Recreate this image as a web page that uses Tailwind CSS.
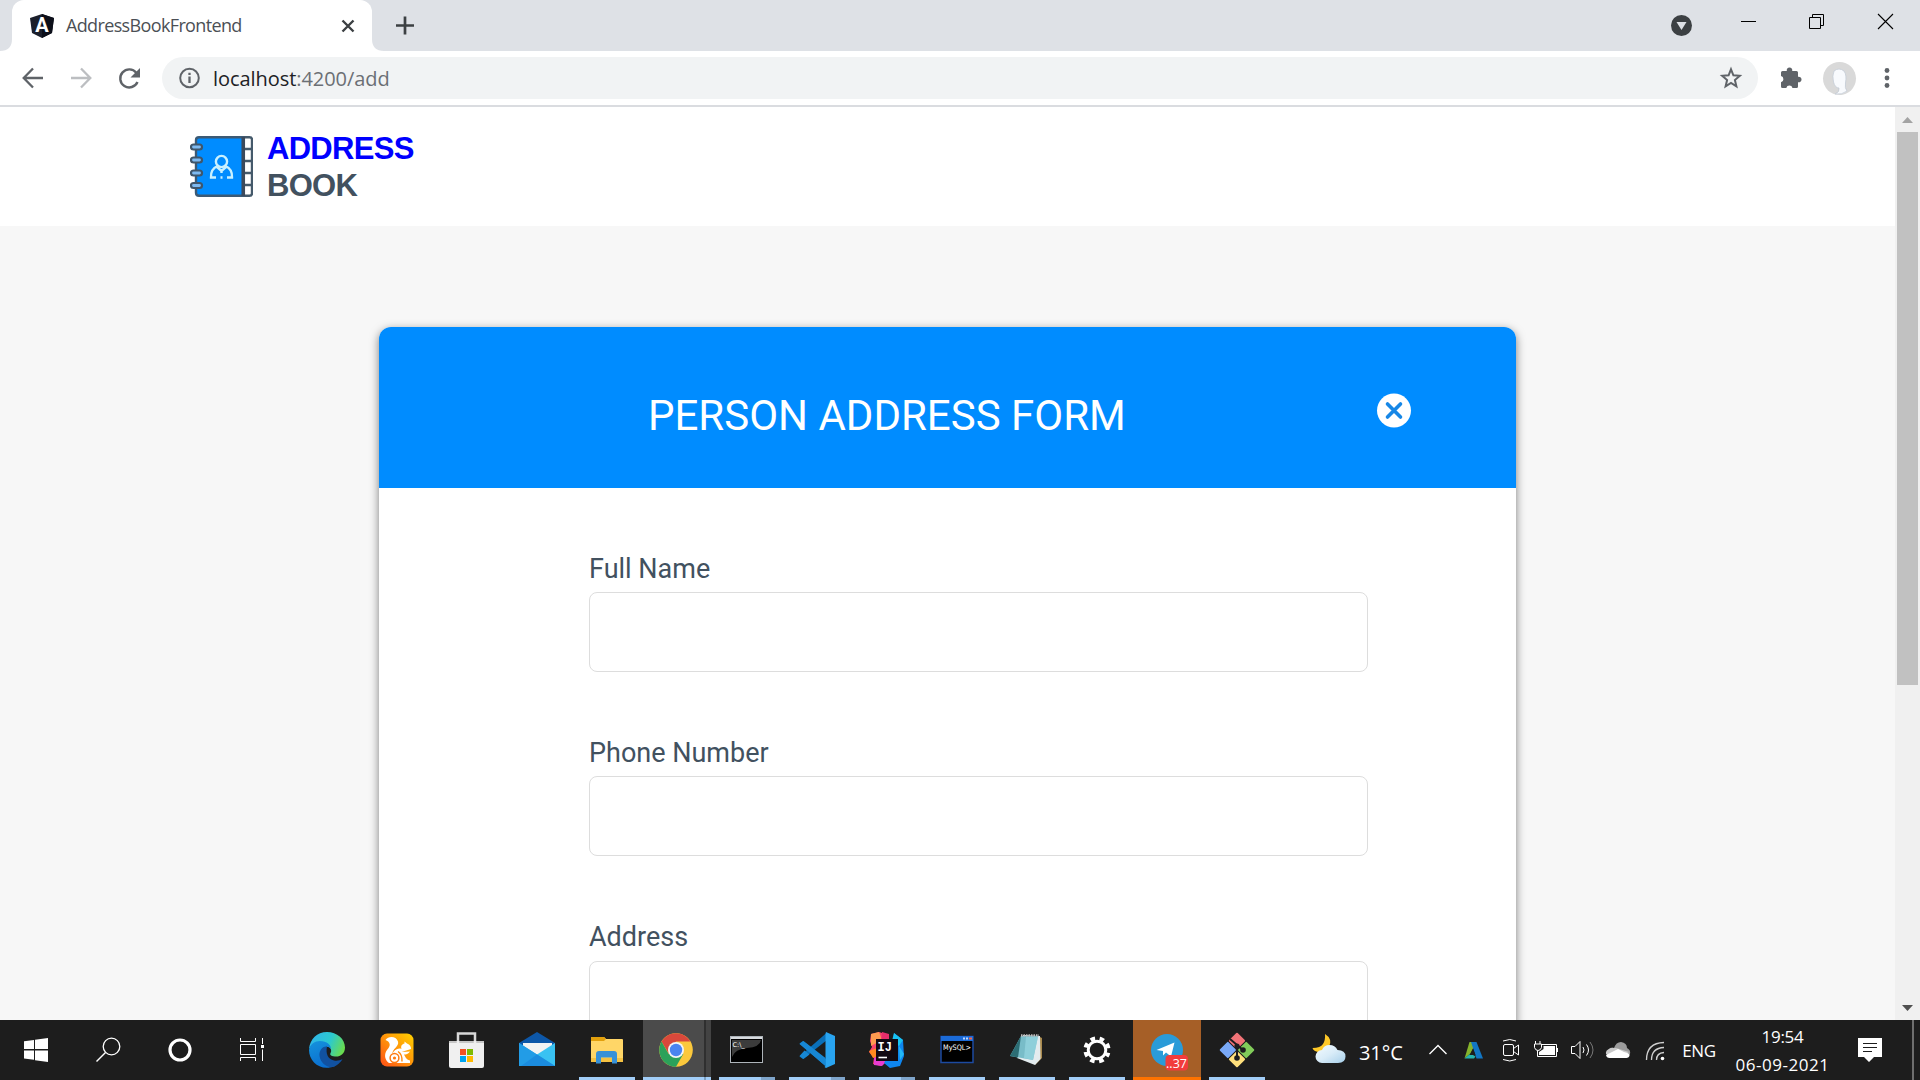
<!DOCTYPE html>
<html lang="en">
<head>
<meta charset="utf-8">
<title>AddressBookFrontend</title>
<script src="https://cdn.jsdelivr.net/npm/@tailwindcss/browser@4"></script>
</head>
<body class="w-[1920px] h-[1080px] overflow-hidden flex flex-col bg-white font-['Open_Sans',sans-serif]">

<!-- Tab strip -->
<header class="h-[51px] shrink-0 bg-[#dee1e6] flex">
  <svg class="w-3 h-[51px] shrink-0" viewBox="0 0 12 51"><path d="M12 39V51H0Q12 51 12 39Z" fill="#fff"/></svg>
  <div class="w-[360px] shrink-0 bg-white rounded-t-[12px] flex items-center">
    <svg class="w-6 h-6 ml-[18px] mt-[1px] shrink-0" viewBox="30 14 24 24">
      <path d="M42 14l12 4-2 15-10 5-10-5-2-15z" fill="#1b1f2b"/><path d="M42 14l12 4-2 15-10 5z" fill="#0c0f1a"/>
      <text x="42" y="32" font-family="Roboto" font-weight="700" font-size="20" text-anchor="middle" fill="#fff">A</text>
    </svg>
    <span class="ml-3 -mt-px w-[272px] shrink-0 text-[18px] leading-6 tracking-[-0.64px] text-[#4b4f55] whitespace-nowrap">AddressBookFrontend</span>
    <svg class="w-5 h-5 shrink-0" viewBox="338 15.500 20 20"><path d="M342.500 20l11 11M353.500 20l-11 11" stroke="#3c4043" stroke-width="2.400"/></svg>
  </div>
  <svg class="w-3 h-[51px] shrink-0" viewBox="0 0 12 51"><path d="M0 39V51H12Q0 51 0 39Z" fill="#fff"/></svg>
  <svg class="w-[42px] h-[51px]" viewBox="384 0 42 51"><path d="M396 25.500h18M405 16.500v18" stroke="#3c4043" stroke-width="2.700"/></svg>
  <svg class="w-[260px] h-[51px] ml-auto" viewBox="1660 0 260 51" fill="none">
    <circle cx="1681.500" cy="25.500" r="10.500" fill="#3c4043"/><path d="M1676.500 22h10l-5 8z" fill="#dee1e6"/>
    <path d="M1741 21.500h15" stroke="#000"/>
    <path d="M1809.500 17.500h11v11h-11zM1812.500 17.500v-3h11v11h-3" stroke="#000"/>
    <path d="M1878 14l15 15M1893 14l-15 15" stroke="#000" stroke-width="1.100"/>
  </svg>
</header>

<!-- Toolbar -->
<nav class="h-[56px] shrink-0 border-b-2 border-[#dadce0] bg-white flex items-center">
  <svg class="w-[162px] h-[54px] shrink-0" viewBox="0 51 162 54" fill="none">
    <path d="M43 78H25M33 68.500L23.700 78L33 87.500" stroke="#5f6368" stroke-width="2.300"/>
    <path d="M71 78h18M81 68.500L90.300 78L81 87.500" stroke="#bcbec1" stroke-width="2.300"/>
    <path d="M137.500 82a9 9 0 1 1-1.200-9.200" stroke="#5f6368" stroke-width="2.400"/><path d="M140 68v9.500h-9.500z" fill="#5f6368"/>
  </svg>
  <div class="w-[1596px] h-[42px] rounded-full bg-[#f1f3f4] flex items-center shrink-0">
    <svg class="w-[22px] h-[22px] ml-4 shrink-0" viewBox="178 67.500 22 22" fill="none"><circle cx="189.500" cy="78.500" r="9.300" stroke="#5f6368" stroke-width="2"/><path d="M189.500 77v6.500M189.500 73.300v2.300" stroke="#5f6368" stroke-width="2.300"/></svg>
    <span class="ml-[13px] mt-[2px] text-[20px] leading-6 tracking-[-0.06px] text-[#6b6f74] whitespace-nowrap"><span class="text-[#202124]">localhost</span>:4200/add</span>
    <svg class="w-6 h-6 ml-auto mr-[15px]" viewBox="0 0 24 24"><path d="M12 3.300l2.400 6 6.400.5-4.900 4.200 1.500 6.300-5.400-3.400-5.400 3.400 1.500-6.300-4.900-4.200 6.400-.5z" fill="none" stroke="#5f6368" stroke-width="2"/></svg>
  </div>
  <svg class="w-[162px] h-[54px] shrink-0" viewBox="1758 51 162 54">
    <path d="M1782.500 71h4.300a2.800 2.800 0 1 1 5.400 0h4.300q1.500 0 1.500 1.500v4.300a2.800 2.800 0 1 1 0 5.400v4.300q0 1.500-1.500 1.500h-4a3.200 3.200 0 0 0-6.200 0h-3.800q-1.500 0-1.500-1.500v-4.200a3.200 3.200 0 0 0 0-6.200v-3.600q0-1.500 1.500-1.500z" fill="#5f6368"/>
    <circle cx="1839.500" cy="78.500" r="16.500" fill="#d9d9d9"/>
    <path d="M1834 71q5-4 10 0q3 4 1.500 12q-1 5 1.500 8q-5 4-12 3q5-2 4-6q-4 0-5.500-6q-1.500-6 .5-11z" fill="#f8fafd" stroke="#c4ccd6" stroke-width=".8"/>
    <g fill="#5f6368"><circle cx="1887" cy="70.500" r="2.400"/><circle cx="1887" cy="78" r="2.400"/><circle cx="1887" cy="85.500" r="2.400"/></g>
  </svg>
</nav>

<!-- Page viewport -->
<div class="h-[913px] shrink-0 flex overflow-hidden">
  <main class="w-[1895px] bg-[#f7f7f7] overflow-hidden">
    <div class="h-[119px] bg-white flex pl-[190px] pt-[29px]">
      <svg class="w-[63px] h-[61px] shrink-0" viewBox="190 136 63 61" fill="none">
        <rect x="240" y="137.200" width="12" height="58.600" rx="2.500" fill="#fff" stroke="#455a6b" stroke-width="2.400"/>
        <path d="M244 149h8M244 161h8M244 173h8M244 185h8" stroke="#455a6b" stroke-width="2.600"/>
        <path d="M199 137.200h44v58.600h-44q-3 0-3-3v-52.600q0-3 3-3z" fill="#008cff" stroke="#3c5a75" stroke-width="2.400"/>
        <path d="M243.300 137v59" stroke="#3c4a5c" stroke-width="3.500"/>
        <g stroke="#3f566b" stroke-width="2.200" fill="#7fbaf0"><rect x="191" y="144.500" width="11" height="5" rx="2.500"/><rect x="191" y="157.500" width="11" height="5" rx="2.500"/><rect x="191" y="170.500" width="11" height="5" rx="2.500"/><rect x="191" y="183" width="11" height="5" rx="2.500"/></g>
        <g stroke="#c9f1ff" stroke-width="2.400"><circle cx="221.500" cy="161.500" r="5.600"/><path d="M217.500 166q-7 3-6.500 11.500h5M225.500 166q7 3 6.500 11.500h-5M217 167l4.500 4 4.500-4M221.500 171v2M220.500 177.500h2"/></g>
      </svg>
      <div class="ml-[14px] -mt-[6px] font-['Liberation_Sans',sans-serif] font-bold text-[31px] leading-[37px] tracking-[-0.7px]">
        <div class="text-[#0000ff]">ADDRESS</div>
        <div class="text-[#42515f]">BOOK</div>
      </div>
    </div>
    <section class="mt-[101px] ml-[379px] w-[1137px] h-[900px] rounded-[12px] bg-white shadow-[0_3px_10px_rgba(0,0,0,0.5)] overflow-hidden font-['Roboto',sans-serif]">
      <div class="h-[161px] bg-[#008cff] flex">
        <h1 class="ml-[269px] mt-[64px] w-[728px] text-[42px] leading-[50px] text-white whitespace-nowrap">PERSON ADDRESS FORM</h1>
        <svg class="w-[36px] h-[36px] mt-[66px] shrink-0" viewBox="0 0 36 36"><circle cx="18" cy="17.500" r="17" fill="#fff"/><path d="M11.500 11l13 13M24.500 11l-13 13" stroke="#1787e6" stroke-width="3.600" stroke-linecap="round"/></svg>
      </div>
      <form class="pl-[210px] pt-[65px] text-[27px] leading-8 text-[#42515f]">
        <label class="block h-[184px]">Full Name<input class="block mt-[7px] w-[779px] h-20 rounded-[8px] border border-[#dddddd]"></label>
        <label class="block h-[184px]">Phone Number<input class="block mt-[7px] w-[779px] h-20 rounded-[8px] border border-[#dddddd]"></label>
        <label class="block h-[184px]">Address<input class="block mt-2 w-[779px] h-20 rounded-[8px] border border-[#dddddd]"></label>
      </form>
    </section>
  </main>
  <div class="w-[25px] bg-[#f0f0f0] flex flex-col items-center">
    <svg class="w-[25px] h-[25px] shrink-0" viewBox="0 0 25 25"><path d="M7 16h11l-5.500-6z" fill="#a3a3a3"/></svg>
    <div class="w-[21px] h-[553px] bg-[#c1c1c1]"></div>
    <svg class="w-[25px] h-[25px] mt-auto" viewBox="0 0 25 25"><path d="M7 10h11l-5.500 6z" fill="#505050"/></svg>
  </div>
</div>

<!-- Taskbar -->
<footer class="h-[60px] shrink-0 bg-[#1d1d1d] flex text-white">
  <svg class="w-[292px] h-[60px] shrink-0" viewBox="0 1020 292 60" fill="none">
    <path d="M24 1041.300l10-1.300v9H24zM35 1039.800l13-1.800v11H35zM24 1050.500h10v9.200l-10-1.300zM35 1050.500h13V1062l-13-1.800z" fill="#fff"/>
    <circle cx="111.500" cy="1046.500" r="8.300" stroke="#fff" stroke-width="1.300"/><path d="M105.500 1052.500L96.500 1061.500" stroke="#fff" stroke-width="1.500"/>
    <circle cx="180" cy="1050" r="10" stroke="#fff" stroke-width="3.200"/>
    <path d="M240.500 1038v3.500h15v-3.500M240.500 1044.500h15v10h-15zM240.500 1061v-3.500h15v3.500M262.500 1038v6M262.500 1049.500v11.500" stroke="#fff"/><rect x="261" y="1045" width="3" height="3" fill="#fff"/>
  </svg>

  <div class="w-[70px] flex items-center justify-center">
    <svg class="w-9 h-9" viewBox="0 0 36 36">
      <defs><linearGradient id="edgeTop" x1="0" y1=".3" x2="1" y2=".6"><stop offset="0" stop-color="#2fb4ea"/><stop offset=".55" stop-color="#2cc9cf"/><stop offset="1" stop-color="#6bdc4c"/></linearGradient><linearGradient id="edgeLow" x1="0" y1="0" x2=".4" y2="1"><stop offset="0" stop-color="#1593dc"/><stop offset="1" stop-color="#0b6fd0"/></linearGradient></defs>
      <path d="M0 17C1 7 8 0 18 0C28 0 36 7 36 15.500C36 22 31 25 26 24.500C21 24 20.500 22.500 22 20C23 17 20 14 17 14C12 10 4 10 0 17Z" fill="url(#edgeTop)"/>
      <path d="M0 18C1 12 6 9 11 9C18 9 22 13 22 17C18 12 11 16 12 24C13 31 20 35 26 34C12 40 0 30 0 18Z" fill="url(#edgeLow)"/>
      <path d="M18 14.500C13 14 10 19 10.500 24C11.500 31 18 36 24 35C28 34 32 30 33.500 27C31 28.500 28 29 25 28.500C19 27 16.500 22 18 14.500Z" fill="#1151a0"/>
    </svg>
  </div>
  <div class="w-[70px] flex items-center justify-center">
    <svg class="w-[34px] h-[34px]" viewBox="0 0 34 34">
      <defs><linearGradient id="uc" x1="0" y1="1" x2="1" y2="0"><stop offset="0" stop-color="#ff4f17"/><stop offset=".5" stop-color="#ff930a"/><stop offset="1" stop-color="#ffd200"/></linearGradient></defs>
      <rect x=".5" y=".5" width="33" height="33" rx="6.500" fill="url(#uc)"/>
      <path d="M5.500 7C8 3 16 2.500 18 8.500C19.500 13.500 12 16 12.500 20.500C14 17 18 14.500 21.500 16C20.500 13 22 11 24.500 10.500L24.500 8.500L27 10.500C30 11.500 31 13.500 31 16L21.500 19L30 18.500C28.500 21 26 21.500 24 21.500C25.500 24 26 26.500 30 27.500V30H9C4.500 27 4 21 7 17C9.500 14 10.500 12 9 9.500C8 8 7 7.500 5.500 7Z" fill="#fff"/>
      <circle cx="14.500" cy="25" r="4.400" fill="none" stroke="#ff7a12" stroke-width="1.500"/><circle cx="14.500" cy="25" r="1.600" fill="#ff7a12"/><path d="M18 18.500q4.500 3 4 10" stroke="#ff8a10" fill="none" stroke-width="1.400"/>
    </svg>
  </div>
  <div class="w-[70px] flex items-center justify-center">
    <svg class="w-9 h-9 -ml-[2px]" viewBox="448 1032 36 36">
      <path d="M458 1044v-10.500h17v10.500" fill="none" stroke="#d9d9d9" stroke-width="2.500"/><path d="M449 1041h35v25q0 2-2 2h-31q-2 0-2-2z" fill="#f0f0f0"/><path d="M449 1041h35v2h-35z" fill="#c6c6c6"/><path d="M458 1041v3M475 1041v3" stroke="#eee" stroke-width="2.500"/>
      <rect x="460" y="1049" width="6" height="6" fill="#f25022"/><rect x="467" y="1049" width="6" height="6" fill="#7fba00"/><rect x="460" y="1056" width="6" height="6" fill="#00a4ef"/><rect x="467" y="1056" width="6" height="6" fill="#ffb900"/>
    </svg>
  </div>
  <div class="w-[70px] flex items-center justify-center">
    <svg class="w-9 h-9" viewBox="519 1032 36 36">
      <path d="M519 1043l18-11 18 11v11h-36z" fill="#0d57a8"/><path d="M523 1043h29v12h-29z" fill="#f3f3f3"/><path d="M519 1043l18 11.500v11.500h-18z" fill="#24a0e8"/><path d="M555 1043l-18 11.500v11.500h18z" fill="#39c2f2"/><path d="M519 1043l36 23h-36z" fill="#229ce6"/><path d="M537 1054.500l18 11.500h-34z" fill="#1b8cdf"/>
    </svg>
  </div>
  <div class="w-[70px] flex flex-col items-center">
    <svg class="w-9 h-[57px]" viewBox="589 1020 36 57">
      <path d="M591 1038q0-1 1-1h12l2 2h16q1 0 1 1v22h-32z" fill="#ffd667"/><path d="M591 1038q0-1 1-1h12l2 2-2 2h-13z" fill="#e2a00c"/><path d="M591 1058h32v4h-32z" fill="#f5c242"/><path d="M596 1063.500v-9.500q0-3 3-3h15q3 0 3 3v9.500h-5v-6h-11v6z" fill="#3791d8"/>
    </svg>
    <div class="w-14 h-[3px] bg-[#a1cdf7]"></div>
  </div>
  <div class="w-[70px] flex justify-center">
    <div class="w-[61px] h-[60px] bg-[#4b4b4b] flex flex-col items-center">
      <svg class="w-9 h-[57px] ml-[5px]" viewBox="-18 -30 36 57">
        <circle r="16.800" fill="#fbc83c"/><path d="M-14.500 -8.400A16.800 16.800 0 0 1 14.500 -8.400H0L-7 4z" fill="#d9483b"/><path d="M-14.500 -8.400A16.800 16.800 0 0 0 0 16.800L7.300 4H-7.300z" fill="#2ba15a"/><circle r="8" fill="#f4f4f4"/><circle r="6.200" fill="#4a84f0"/>
      </svg>
      <div class="w-full h-[3px] bg-[#a1cdf7]"></div>
    </div>
    <div class="w-[2px] flex flex-col justify-end bg-[#2f2f2f]"><div class="h-[3px] bg-[#7d9fbf]"></div></div>
    <div class="w-[5px] flex flex-col justify-end bg-[#434343]"><div class="h-[3px] bg-[#a1cdf7]"></div></div>
  </div>
  <div class="w-[70px] flex flex-col items-center">
    <svg class="w-9 h-[57px]" viewBox="729 1020 36 57"><rect x="730.500" y="1036.500" width="32" height="26" fill="#000" stroke="#aeb4ba"/><path d="M731 1037h31v2h-31z" fill="#d7dade"/><path d="M732 1040h29q-1 7-14 8-12 1-15 9z" fill="#3c3c3c"/><text x="732.500" y="1046.500" font-family="DejaVu Sans" font-size="6.500" fill="#fff">C:\_</text></svg>
    <div class="w-14 flex"><div class="w-[42px] h-[3px] bg-[#a1cdf7]"></div><div class="w-[14px] h-[3px] bg-[#7fa5cb]"></div></div>
  </div>
  <div class="w-[70px] flex flex-col items-center">
    <svg class="w-9 h-[57px]" viewBox="799 1020 36 57"><path d="M799.500 1043.500l3.500-2.500 24 19v7.500z" fill="#0f80cc"/><path d="M799.500 1056.500l3.500 2.500 24-19v-7.500z" fill="#0a6fb8"/><path d="M826 1032l9 4v28l-9 4-1.500-1 1-1v-32z" fill="#29a4f0"/><path d="M799.500 1056l4 3 6-4.500-5-4zM799.500 1044l4-3 22 17v8z" fill="#1787d4"/></svg>
    <div class="w-14 flex"><div class="w-[42px] h-[3px] bg-[#a1cdf7]"></div><div class="w-[14px] h-[3px] bg-[#7fa5cb]"></div></div>
  </div>
  <div class="w-[70px] flex flex-col items-center">
    <svg class="w-9 h-[57px]" viewBox="869 1020 36 57">
      <path d="M871 1034l8-2 9 3v20l-7 11-8-2 1-6-5-6 3-5-2-6z" fill="#f9436f"/><path d="M871 1034l8-2 3 8-11 6z" fill="#fc9a4f"/><path d="M869 1051l8-3 2 8-6 2z" fill="#ff8a1f"/><path d="M874 1058l7-3 7 5-6 6-8-1z" fill="#e83bd0"/>
      <path d="M882 1032l7 2v9h-8z" fill="#e62e6b"/><path d="M894 1033l9 7 1 16-4 10-10 2-6-5 8-14z" fill="#0e86f0"/><path d="M894 1033l9 7-4 6-7-5z" fill="#18c2f2"/><path d="M899 1046l5 8-4 6z" fill="#23b8f5"/>
      <rect x="876" y="1039" width="22" height="22" fill="#120912"/><text x="877.500" y="1050.500" font-family="Liberation Mono" font-weight="700" font-size="12" fill="#fff">IJ</text><path d="M878.500 1057.500h8.500" stroke="#fff" stroke-width="1.600"/>
    </svg>
    <div class="w-14 flex"><div class="w-[42px] h-[3px] bg-[#a1cdf7]"></div><div class="w-[14px] h-[3px] bg-[#7fa5cb]"></div></div>
  </div>
  <div class="w-[70px] flex flex-col items-center">
    <svg class="w-9 h-[57px]" viewBox="938 1020 36 57"><rect x="940" y="1036.500" width="32" height="26" fill="#000" stroke="#1c4aa0" stroke-width="1.500"/><path d="M940 1036h32v5h-32z" fill="#1b6bd8"/><path d="M962 1037.500h2v2h-2zM965 1037.500h2v2h-2z" fill="#bcd6ff"/><path d="M968 1037.500h3v2h-3z" fill="#f0694a"/><text x="942" y="1050" font-family="DejaVu Sans" font-size="7.500" textLength="28" lengthAdjust="spacingAndGlyphs" fill="#fff">MySQL&gt;</text></svg>
    <div class="w-14 h-[3px] bg-[#a1cdf7]"></div>
  </div>
  <div class="w-[70px] flex flex-col items-center">
    <svg class="w-9 h-[57px]" viewBox="1009 1020 36 57"><path d="M1038 1036l4 2v20l-7 7z" fill="#a98a4e"/><path d="M1023 1035l17 1 .500 23-5.500 6-18-7z" fill="#e3ecef"/><path d="M1021 1036h17l-5 24-23-4z" fill="#78bcc8"/><path d="M1021 1036l-11 20 8 1.500z" fill="#2c6d74"/><path d="M1026 1037l12 0-5 23-9-2z" fill="#93d3de" opacity=".8"/><path d="M1021 1035.500h18" stroke="#bbb" stroke-width="2.500" stroke-dasharray="1.500 1"/></svg>
    <div class="w-14 h-[3px] bg-[#a1cdf7]"></div>
  </div>
  <div class="w-[70px] flex flex-col items-center">
    <svg class="w-9 h-[57px]" viewBox="-18 -30 36 57" fill="none" stroke="#fff"><circle r="8.800" stroke-width="3"/><circle r="11.500" stroke-width="4.200" stroke-dasharray="4.600 4.432" stroke-dashoffset="2.300" transform="rotate(22.500)"/></svg>
    <div class="w-14 h-[3px] bg-[#a1cdf7]"></div>
  </div>
  <div class="w-[70px] flex flex-col items-center">
    <div class="w-[68px] h-[57px] bg-[#a65f27]">
      <svg class="w-[68px] h-[57px]" viewBox="1133 1020 68 57"><circle cx="1167" cy="1050" r="16" fill="#2a9bd8"/><path d="M1156.500 1050l18-7.500-3.500 14-5-4-3 3v-4.500z" fill="#fff"/><rect x="1165.500" y="1055" width="22.500" height="15.500" rx="4" fill="#f23c3c"/><text x="1176.500" y="1067.500" text-anchor="middle" font-family="Open Sans" font-size="12.500" fill="#fff">..37</text></svg>
    </div>
    <div class="w-[68px] h-[3px] bg-[#ff7300]"></div>
  </div>
  <div class="w-[70px] flex flex-col items-center">
    <svg class="w-9 h-[57px]" viewBox="-18 -30 36 57"><g transform="rotate(45)"><rect x="-12.500" y="-12.500" width="12" height="12" rx="1" fill="#f17377"/><rect x=".5" y="-12.500" width="12" height="12" rx="1" fill="#82cc5a"/><rect x="-12.500" y=".5" width="12" height="12" rx="1" fill="#7aa9f7"/><rect x=".5" y=".5" width="12" height="12" rx="1" fill="#ffe07c"/></g><path d="M-7 -11L7 1M0 -5V8" stroke="#1d1d1d" stroke-width="2"/><circle cx="0" cy="8" r="2.800" fill="#1d1d1d"/><circle cx="6" cy="0" r="2.800" fill="#1d1d1d"/><circle cx="0" cy="-4" r="2.600" fill="#1d1d1d"/></svg>
    <div class="w-14 h-[3px] bg-[#a1cdf7]"></div>
  </div>

  <!-- System tray -->
  <svg class="w-9 h-[60px] ml-[40px] shrink-0" viewBox="1312 1020 36 60">
    <defs><linearGradient id="cloud" x1="0" y1="0" x2="1" y2="1"><stop offset="0" stop-color="#f4fbff"/><stop offset=".5" stop-color="#d9ecf8"/><stop offset="1" stop-color="#a6cfea"/></linearGradient></defs>
    <path d="M1325 1034q8 5 4 13-5 8-14 4-2-1-2.500-3 8 0 10.500-4 2.500-4 2-10z" fill="#ffc928"/><path d="M1322 1063a6.500 6.500 0 0 1 0-13q2-5 7.500-5t8 5q8 0 8 6.500t-7.500 6.500z" fill="url(#cloud)"/>
  </svg>
  <div class="w-[74px] pl-[11px] pt-[20px] text-[20px] leading-[26px] tracking-[-0.1px] whitespace-nowrap">31°C</div>
  <svg class="w-[254px] h-[60px] shrink-0" viewBox="1422 1020 254 60" fill="none" stroke="#fff">
    <path d="M1429.500 1054l8.500-8.500 8.500 8.500" stroke-width="1.400"/>
    <g stroke="none"><path d="M1469.500 1042h6.500l-5 11-6.500 5.500z" fill="#86b42c"/><path d="M1464.500 1058.500l6-5 5 3-1.500 2z" fill="#25b4b0"/><path d="M1471 1042h5.500l6.500 16.500h-6.500z" fill="#1276c4"/><path d="M1473 1048.500l-3.500 6.500 6 0z" fill="#1d1d1d"/></g>
    <rect x="1503.500" y="1044.500" width="10" height="11" rx="1.500"/><path d="M1513.500 1048.500l5-3.500v10l-5-3.500M1503 1041q7-3 13 0M1503 1059.500q7 3 13 0"/>
    <path d="M1542 1044.500h14.500v12h-19v-6M1557.500 1048v4M1535.500 1041v3M1540 1041v3M1534.500 1044h7v3.500q-1 3-3.500 3t-3.500-3z"/><path d="M1543.500 1046h11.500v9h-16v-3l4.500-3z" fill="#fff" stroke="none"/>
    <path d="M1571.500 1046.500h3.500l5-5v17l-5-5h-3.500z"/><path d="M1583 1047q2 3 0 6M1586.500 1044.500q4 5.500 0 11"/><path d="M1590 1042q6 8 0 16" stroke="#777"/>
    <g stroke="none"><path d="M1611 1057a5.500 5.500 0 0 1-1-9q3-1 4 0 2-6 7-6 6 1 6 6 4 2 3 6-1 3-5 3z" fill="#9b9b9b"/><path d="M1606 1054q-1-4 5-6h5l13 4-8 5h-10z" fill="#c9c9c9"/><path d="M1606 1055l12-6 6 3q6 1 5.500 4-1 2-3 2h-17q-3 0-3.500-3z" fill="#fff"/></g>
    <path d="M1646.500 1060q0-17 17.500-17.500M1651.500 1060q0-12 12.500-12.500M1656.500 1060q0-7 7.500-7.500" stroke="#d0d0d0" stroke-width="1.300"/><circle cx="1662.500" cy="1058.500" r="1.800" fill="#fff" stroke="none"/>
  </svg>
  <div class="w-[46px] pt-[18px] text-center text-[17px] leading-[26px] tracking-[-0.4px]">ENG</div>
  <div class="w-[121px] pt-[3px] text-center text-[17px] leading-[28px]"><div class="tracking-[-0.3px]">19:54</div><div class="tracking-[0.55px]">06-09-2021</div></div>
  <svg class="w-[77px] h-[60px] shrink-0" viewBox="1843 1020 77 60"><path d="M1858 1038h24v19h-8l-5 5-5-5h-6z" fill="#fff"/><path d="M1863 1043.500h14M1863 1047.500h14M1863 1051.500h9" stroke="#1d1d1d"/><path d="M1913 1020v60" stroke="#6e6e6e" stroke-width="2"/></svg>
</footer>
</body>
</html>
